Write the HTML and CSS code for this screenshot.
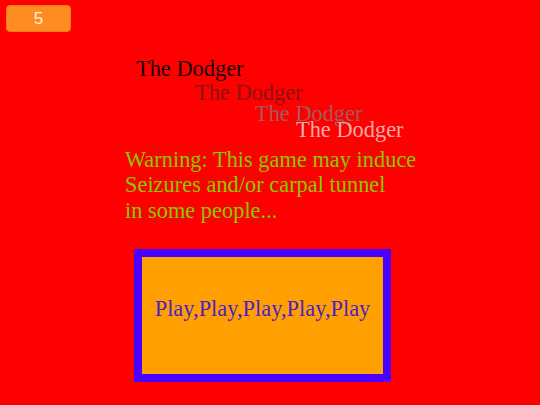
FILE: index.html
```html
<!DOCTYPE html>
<html>
<head>
<meta charset="utf-8">
<link rel="stylesheet" href="styles.css">
</head>
<body>
<div class="badge">5</div>
<div class="titles">
  <div class="title t1">The Dodger</div>
  <div class="title t2">The Dodger</div>
  <div class="title t3">The Dodger</div>
  <div class="title t4">The Dodger</div>
</div>
<div class="warning">Warning: This game may induce<br>Seizures and/or carpal tunnel<br>in some people...</div>
<div class="play">Play,Play,Play,Play,Play</div>
</body>
</html>
```

FILE: styles.css
```css
html, body {
  margin: 0;
  padding: 0;
  background: #ff0000;
  width: 540px;
  height: 405px;
  overflow: hidden;
}
body {
  font-family: "Liberation Serif", "Times New Roman", serif;
  font-size: 22.4px;
}
.badge {
  margin: 5px 0 0 6px;
  width: 65px;
  height: 27px;
  box-sizing: border-box;
  background: #ff8c22;
  border: 1px solid #f27d14;
  border-radius: 4px;
  color: #fff0dc;
  font-family: "Liberation Sans", Arial, sans-serif;
  font-size: 17px;
  line-height: 25px;
  text-align: center;
}
.title {
  line-height: 22px;
  white-space: nowrap;
}
.t1 { margin: 26px 0 0 136px; color: #220000; }
.t2 { margin: 2px 0 0 195px; color: #8c1212; }
.t3 { margin: -1px 0 0 255px; color: #a05c5c; }
.t4 { margin: -6px 0 0 296px; color: #eeaaaa; }
.warning {
  margin: 6px 0 0 125px;
  line-height: 25.3px;
  color: #88c800;
}
.play {
  margin: 26px 0 0 134px;
  width: 257px;
  height: 133px;
  box-sizing: border-box;
  border: 8px solid #4a00ff;
  background: #ffa000;
  color: #4b1fc8;
  padding-top: 41px;
  line-height: 22px;
  text-align: center;
}
```
